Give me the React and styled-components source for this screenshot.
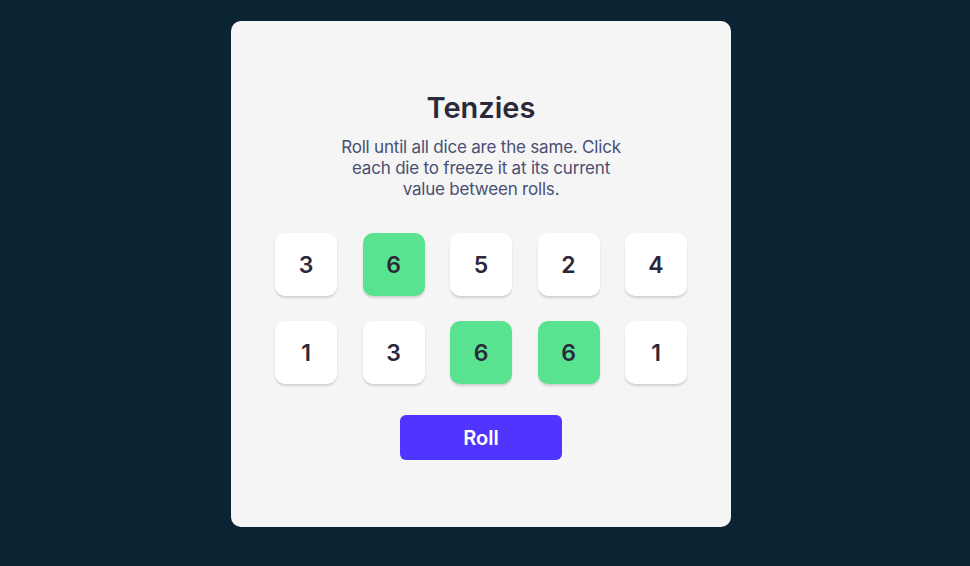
import React, { useState } from "react";
import styled, { createGlobalStyle } from "styled-components";

const GlobalStyle = createGlobalStyle`
  html, body {
    margin: 0;
    padding: 0;
    background: #0B2434;
  }
  body {
    font-family: Inter, "Noto Sans", sans-serif;
  }
`;

const Page = styled.div`
  display: flex;
  justify-content: center;
  padding: 21px 8px 0 0;
  min-height: 566px;
  box-sizing: border-box;
`;

const Card = styled.main`
  width: 500px;
  height: 506px;
  padding-top: 2px;
  background: #F5F5F5;
  border-radius: 10px;
  display: flex;
  flex-direction: column;
  align-items: center;
  justify-content: center;
  box-sizing: border-box;
`;

const Title = styled.h1`
  margin: 0;
  font-size: 29px;
  line-height: 35px;
  font-weight: 600;
  color: #2B283A;
`;

const Instructions = styled.p`
  margin: 12px 0 0;
  width: 290px;
  text-align: center;
  font-size: 17px;
  line-height: 21px;
  font-weight: 400;
  color: #4A4E74;
  letter-spacing: -0.2px;
`;

const DiceGrid = styled.div`
  margin-top: 33px;
  display: grid;
  grid-template-columns: repeat(5, 62px);
  column-gap: 25.5px;
  row-gap: 25px;
`;

const Die = styled.button`
  width: 62px;
  height: 63px;
  border: none;
  border-radius: 10px;
  background: ${({ $held }) => ($held ? "#59E391" : "#FFFFFF")};
  box-shadow: 0 2px 2px rgba(0, 0, 0, 0.15);
  font-family: Inter, sans-serif;
  font-size: 23px;
  font-weight: 600;
  color: #2B283A;
  cursor: pointer;
  padding: 0;
`;

const RollButton = styled.button`
  margin-top: 31px;
  width: 162px;
  height: 45px;
  border: none;
  border-radius: 6px;
  background: #5035FF;
  color: #FFFFFF;
  font-family: Inter, sans-serif;
  font-size: 20px;
  font-weight: 600;
  cursor: pointer;
`;

const initialDice = [
  { value: 3, held: false },
  { value: 6, held: true },
  { value: 5, held: false },
  { value: 2, held: false },
  { value: 4, held: false },
  { value: 1, held: false },
  { value: 3, held: false },
  { value: 6, held: true },
  { value: 6, held: true },
  { value: 1, held: false },
];

export default function App() {
  const [dice, setDice] = useState(initialDice);

  const toggle = (i) =>
    setDice((d) => d.map((die, j) => (j === i ? { ...die, held: !die.held } : die)));

  const roll = () =>
    setDice((d) =>
      d.map((die) => (die.held ? die : { ...die, value: Math.ceil(Math.random() * 6) }))
    );

  return (
    <>
      <GlobalStyle />
      <Page>
        <Card>
          <Title>Tenzies</Title>
          <Instructions>
            Roll until all dice are the same. Click each die to freeze it at its current value
            between rolls.
          </Instructions>
          <DiceGrid>
            {dice.map((die, i) => (
              <Die key={i} $held={die.held} onClick={() => toggle(i)}>
                {die.value}
              </Die>
            ))}
          </DiceGrid>
          <RollButton onClick={roll}>Roll</RollButton>
        </Card>
      </Page>
    </>
  );
}
